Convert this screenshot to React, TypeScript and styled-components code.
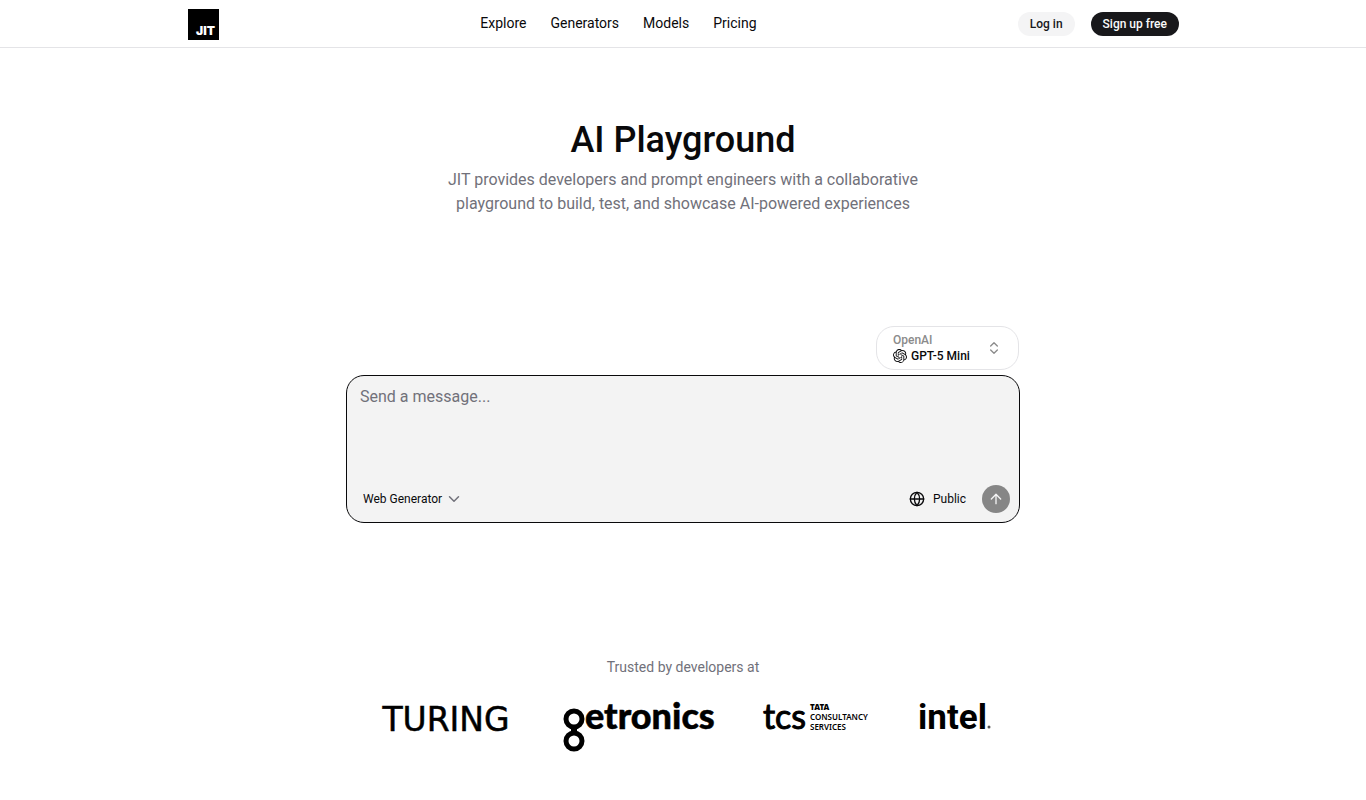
import React from "react";
import styled, { createGlobalStyle } from "styled-components";
import { ArrowUp, ChevronDown, ChevronsUpDown, Globe } from "lucide-react";
import { SiOpenai } from "react-icons/si";

const GlobalStyle = createGlobalStyle`
  *, *::before, *::after { box-sizing: border-box; }
  body {
    margin: 0;
    background: #fff;
    color: #09090b;
    font-family: Roboto, "Liberation Sans", sans-serif;
  }
  button, select, textarea { font-family: inherit; color: inherit; }
`;

const Header = styled.header`
  border-bottom: 1px solid #e4e4e7;
`;

const HeaderInner = styled.div`
  display: flex;
  align-items: center;
  justify-content: space-between;
  max-width: 1024px;
  margin: 0 auto;
  padding: 8px 16px 7px;
`;

const HomeLink = styled.a`
  display: block;
  width: 32px;
  height: 32px;
  svg { display: block; }
`;

const Nav = styled.nav`
  display: flex;
  gap: 24px;
`;

const NavLink = styled.a`
  color: #09090b;
  font-size: 14px;
  line-height: 20px;
  padding-bottom: 2px;
  text-decoration: none;
`;

const Actions = styled.div`
  display: flex;
  gap: 16px;
`;

const PillButton = styled.button<{ $dark?: boolean }>`
  height: 24px;
  padding: 0 12px;
  border: 0;
  border-radius: 12px;
  background: ${(p) => (p.$dark ? "#18181b" : "#f4f4f5")};
  color: ${(p) => (p.$dark ? "#fafafa" : "#18181b")};
  font-size: 12px;
  font-weight: 500;
  line-height: 16px;
  cursor: pointer;
`;

const Main = styled.main`
  display: flex;
  flex-direction: column;
  align-items: center;
  padding: 72px 16px 40px;
`;

const Title = styled.h1`
  margin: 0;
  font-size: 36px;
  line-height: 40px;
  font-weight: 500;
`;

const Intro = styled.p`
  max-width: 512px;
  margin: 8px 0 0;
  color: #71717a;
  font-size: 16px;
  line-height: 24px;
  text-align: center;
`;

const Composer = styled.form`
  display: flex;
  flex-direction: column;
  width: 100%;
  max-width: 674px;
  margin-top: 110px;
`;

const ModelPicker = styled.label`
  display: flex;
  align-items: center;
  align-self: flex-end;
  gap: 16px;
  height: 44px;
  margin: 0 1px 5px 0;
  padding: 0 16px;
  border: 1px solid #e4e4e7;
  border-radius: 18px;
  color: #8b8b8b;
`;

const ModelText = styled.span`
  display: flex;
  flex-direction: column;
`;

const Vendor = styled.span`
  font-size: 12px;
  line-height: 16px;
  font-weight: 500;
`;

const ModelName = styled.span`
  display: flex;
  align-items: center;
  gap: 4px;
  color: #09090b;
`;

const PlainSelect = styled.select<{ $medium?: boolean }>`
  appearance: none;
  border: 0;
  padding: 0;
  background: transparent;
  color: #09090b;
  font-size: 12px;
  line-height: 16px;
  font-weight: ${(p) => (p.$medium ? 500 : 400)};
  cursor: pointer;
`;

const PromptBox = styled.div`
  display: flex;
  flex-direction: column;
  border: 1px solid #09090b;
  border-radius: 18px;
  background: #f3f3f3;
`;

const Prompt = styled.textarea`
  display: block;
  width: 100%;
  height: 100px;
  padding: 9px 13px;
  border: 0;
  outline: 0;
  resize: none;
  background: transparent;
  font-size: 16px;
  line-height: 24px;
  &::placeholder { color: #71717a; opacity: 1; }
`;

const Toolbar = styled.div`
  display: flex;
  align-items: center;
  justify-content: space-between;
  padding: 9px 9px 9px 16px;
`;

const KindPicker = styled.label`
  display: flex;
  align-items: center;
  gap: 2px;
  color: #71717a;
`;

const SendGroup = styled.div`
  display: flex;
  align-items: center;
  gap: 16px;
`;

const Visibility = styled.button`
  display: flex;
  align-items: center;
  gap: 8px;
  padding: 0;
  border: 0;
  background: transparent;
  font-size: 12px;
  line-height: 16px;
  cursor: pointer;
`;

const Send = styled.button`
  display: flex;
  align-items: center;
  justify-content: center;
  width: 28px;
  height: 28px;
  padding: 0;
  border: 0;
  border-radius: 50%;
  background: #868686;
  color: #f4f4f5;
`;

const Trusted = styled.section`
  display: flex;
  flex-direction: column;
  align-items: center;
  margin-top: 134px;
`;

const TrustedLabel = styled.h2`
  margin: 0;
  color: #71717a;
  font-size: 14px;
  line-height: 20px;
  font-weight: 400;
`;

const Logos = styled.div`
  display: flex;
  flex-wrap: wrap;
  justify-content: center;
  gap: 40px;
  margin-top: 13px;
  svg { display: block; }
`;

const navItems = ["Explore", "Generators", "Models", "Pricing"];

const JitLogo = () => (
  <svg width="32" height="32" viewBox="0 0 32 32" role="img" aria-label="JIT">
    <rect x="1" y="1" width="31" height="31" fill="#000" />
    <text x="28" y="27" textAnchor="end" fill="#fff" fontFamily="Inter, sans-serif" fontSize="12" fontWeight="900">JIT</text>
  </svg>
);

const TuringLogo = () => (
  <svg width="148" height="64" viewBox="0 0 148 64" role="img" aria-label="Turing">
    <text x="74" y="41" textAnchor="middle" fontFamily="DejaVu Sans, sans-serif" fontSize="33" stroke="#000" strokeWidth="0.5">TURING</text>
  </svg>
);

const GetronicsLogo = () => (
  <svg width="160" height="64" viewBox="0 0 160 64" role="img" aria-label="Getronics">
    <g fill="none" stroke="#000" strokeWidth="5">
      <circle cx="14" cy="29" r="8" />
      <circle cx="14" cy="51" r="8" />
    </g>
    <rect x="11" y="36" width="6" height="8" />
    <text x="25" y="39" fontFamily="Lato, sans-serif" fontSize="36" fontWeight="900" stroke="#000" strokeWidth="0.5">etronics</text>
  </svg>
);

const TcsLogo = () => (
  <svg width="114" height="64" viewBox="0 0 114 64" role="img" aria-label="TCS, Tata Consultancy Services">
    <text x="3" y="39" fontFamily="Lato, sans-serif" fontSize="34" stroke="#000" strokeWidth="1">tcs</text>
    <g fontFamily="Noto Sans, sans-serif" fontSize="8">
      <text x="50" y="20" fontWeight="900">TATA</text>
      <text x="50" y="30" fontWeight="600">CONSULTANCY</text>
      <text x="50" y="40" fontWeight="600">SERVICES</text>
    </g>
  </svg>
);

const IntelLogo = () => (
  <svg width="80" height="64" viewBox="0 0 80 64" role="img" aria-label="Intel">
    <text x="4" y="39" fontFamily="Roboto, sans-serif" fontSize="35" fontWeight="700">intel</text>
    <circle cx="75" cy="37" r="1.5" fill="#555" />
  </svg>
);

export default function App() {
  return (
    <>
      <GlobalStyle />
      <Header>
        <HeaderInner>
          <HomeLink href="#"><JitLogo /></HomeLink>
          <Nav>
            {navItems.map((item) => (
              <NavLink key={item} href={`#${item.toLowerCase()}`}>{item}</NavLink>
            ))}
          </Nav>
          <Actions>
            <PillButton type="button">Log in</PillButton>
            <PillButton type="button" $dark>Sign up free</PillButton>
          </Actions>
        </HeaderInner>
      </Header>
      <Main>
        <Title>AI Playground</Title>
        <Intro>
          JIT provides developers and prompt engineers with a collaborative playground to build, test, and showcase AI-powered experiences
        </Intro>
        <Composer onSubmit={(e) => e.preventDefault()}>
          <ModelPicker>
            <ModelText>
              <Vendor>OpenAI</Vendor>
              <ModelName>
                <SiOpenai size={14} aria-hidden />
                <PlainSelect $medium>
                  <option>GPT-5 Mini</option>
                </PlainSelect>
              </ModelName>
            </ModelText>
            <ChevronsUpDown size={16} aria-hidden />
          </ModelPicker>
          <PromptBox>
            <Prompt aria-label="Message" placeholder="Send a message..." />
            <Toolbar>
              <KindPicker>
                <PlainSelect aria-label="Generator type">
                  <option>Web Generator</option>
                </PlainSelect>
                <ChevronDown size={18} aria-hidden />
              </KindPicker>
              <SendGroup>
                <Visibility type="button">
                  <Globe size={16} aria-hidden />
                  Public
                </Visibility>
                <Send type="submit" aria-label="Send">
                  <ArrowUp size={16} aria-hidden />
                </Send>
              </SendGroup>
            </Toolbar>
          </PromptBox>
        </Composer>
        <Trusted>
          <TrustedLabel>Trusted by developers at</TrustedLabel>
          <Logos>
            <TuringLogo />
            <GetronicsLogo />
            <TcsLogo />
            <IntelLogo />
          </Logos>
        </Trusted>
      </Main>
    </>
  );
}
